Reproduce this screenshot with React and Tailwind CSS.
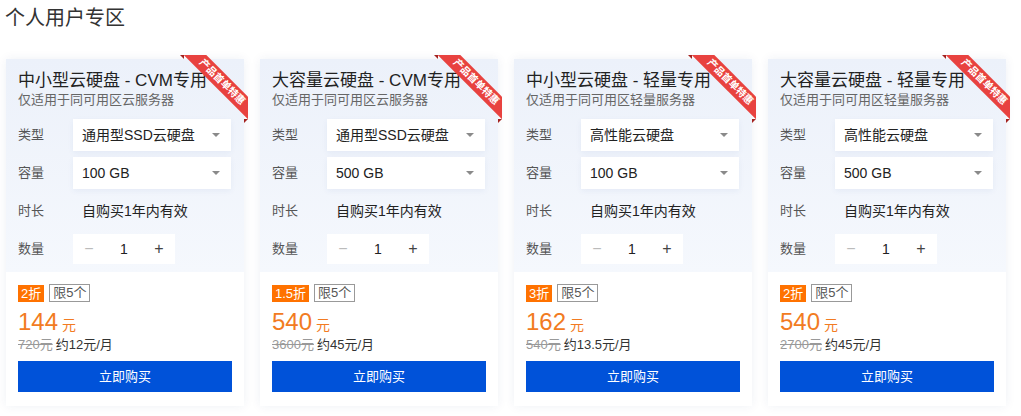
import React from "react";

const products = [
  { title: "中小型云硬盘 - CVM专用", desc: "仅适用于同可用区云服务器", type: "通用型SSD云硬盘", size: "100 GB", off: "2折", price: "144", orig: "720元", month: "约12元/月" },
  { title: "大容量云硬盘 - CVM专用", desc: "仅适用于同可用区云服务器", type: "通用型SSD云硬盘", size: "500 GB", off: "1.5折", price: "540", orig: "3600元", month: "约45元/月" },
  { title: "中小型云硬盘 - 轻量专用", desc: "仅适用于同可用区轻量服务器", type: "高性能云硬盘", size: "100 GB", off: "3折", price: "162", orig: "540元", month: "约13.5元/月" },
  { title: "大容量云硬盘 - 轻量专用", desc: "仅适用于同可用区轻量服务器", type: "高性能云硬盘", size: "500 GB", off: "2折", price: "540", orig: "2700元", month: "约45元/月" },
];

function Select({ value }) {
  return (
    <div className="flex items-center justify-between w-[158px] h-[32px] bg-white pl-[9px] pr-[11px] shadow-[0_2px_6px_rgba(30,70,150,0.06)] text-[14px] text-[#222]">
      <span>{value}</span>
      <span className="w-0 h-0 border-x-[4px] border-t-[4px] border-x-transparent border-t-[#8a8a8a]" />
    </div>
  );
}

function Row({ label, children }) {
  return (
    <div className="flex items-center h-[32px]">
      <span className="w-[55px] text-[13px] text-[#555]">{label}</span>
      {children}
    </div>
  );
}

function Ribbon() {
  return (
    <>
      {/* folds behind the band */}
      <span className="absolute top-[-4px] left-[174px] w-0 h-0 border-l-[4px] border-t-[4px] border-l-transparent border-t-[#a3221f]" />
      <span className="absolute top-[60px] right-[-4px] w-0 h-0 border-r-[4px] border-t-[4px] border-r-transparent border-t-[#a3221f]" />
      <div className="absolute -top-[4px] -right-[4px] w-[66px] h-[66px] overflow-hidden z-10">
        <div className="absolute left-[-10.5px] top-[18.5px] w-[100px] h-[16px] rotate-45 bg-[#e8423f] text-white text-[10px] font-bold leading-[16px] text-center whitespace-nowrap">
          产品首单特惠
        </div>
      </div>
    </>
  );
}

function Card({ p }) {
  return (
    <div className="relative w-[238px] bg-white shadow-[0_0_10px_rgba(20,50,120,0.07)]">
      <Ribbon />
      <div className="px-3 pt-[11px] pb-[7px] bg-gradient-to-b from-[#ecf1fa] to-[#f5f8fd]">
        <div className="text-[17px] leading-[22px] text-[#222]">{p.title}</div>
        <div className="text-[13px] leading-[16px] text-[#666]">{p.desc}</div>
        <div className="flex flex-col gap-[6px] mt-[11px]">
          <Row label="类型"><Select value={p.type} /></Row>
          <Row label="容量"><Select value={p.size} /></Row>
          <Row label="时长"><span className="pl-[9px] text-[14px] text-[#222]">自购买1年内有效</span></Row>
          <Row label="数量">
            <div className="flex h-[30px] text-[14px]">
              <div className="w-[32px] flex items-center justify-center bg-white text-[#bbb] text-[16px]">−</div>
              <div className="w-[38px] flex items-center justify-center bg-white text-[#222]">1</div>
              <div className="w-[32px] flex items-center justify-center bg-white text-[#444] text-[16px]">+</div>
            </div>
          </Row>
        </div>
      </div>
      <div className="px-3 pt-[12px] pb-[14px]">
        <div className="flex items-center gap-[5px]">
          <span className="h-[17px] px-[3px] bg-[#ff7200] text-white text-[13px] leading-[17px]">{p.off}</span>
          <span className="h-[18px] px-[3px] border border-[#999] text-[#555] text-[13px] leading-[16px]">限5个</span>
        </div>
        <div className="mt-[6px] h-[28px] leading-[28px] text-[#f27b22]">
          <span className="text-[24px]">{p.price}</span>
          <span className="text-[14px] ml-[4px]">元</span>
        </div>
        <div className="text-[13px] leading-[18px]">
          <span className="line-through text-[#999]">{p.orig}</span>
          <span className="ml-[3px] text-[#333]">{p.month}</span>
        </div>
        <button className="mt-[7px] w-full h-[31px] bg-[#0052d9] text-white text-[13px]">立即购买</button>
      </div>
    </div>
  );
}

export default function App() {
  return (
    <div className="w-[1021px] h-[416px] bg-white overflow-hidden font-['Liberation_Sans','Noto_Sans_CJK_SC',sans-serif]">
      <h1 className="pl-[5px] pt-1 text-[20px] leading-[28px] text-[#333]">个人用户专区</h1>
      <div className="flex gap-4 pl-[6px] mt-[27px]">
        {products.map((p) => (
          <Card key={p.title} p={p} />
        ))}
      </div>
    </div>
  );
}
